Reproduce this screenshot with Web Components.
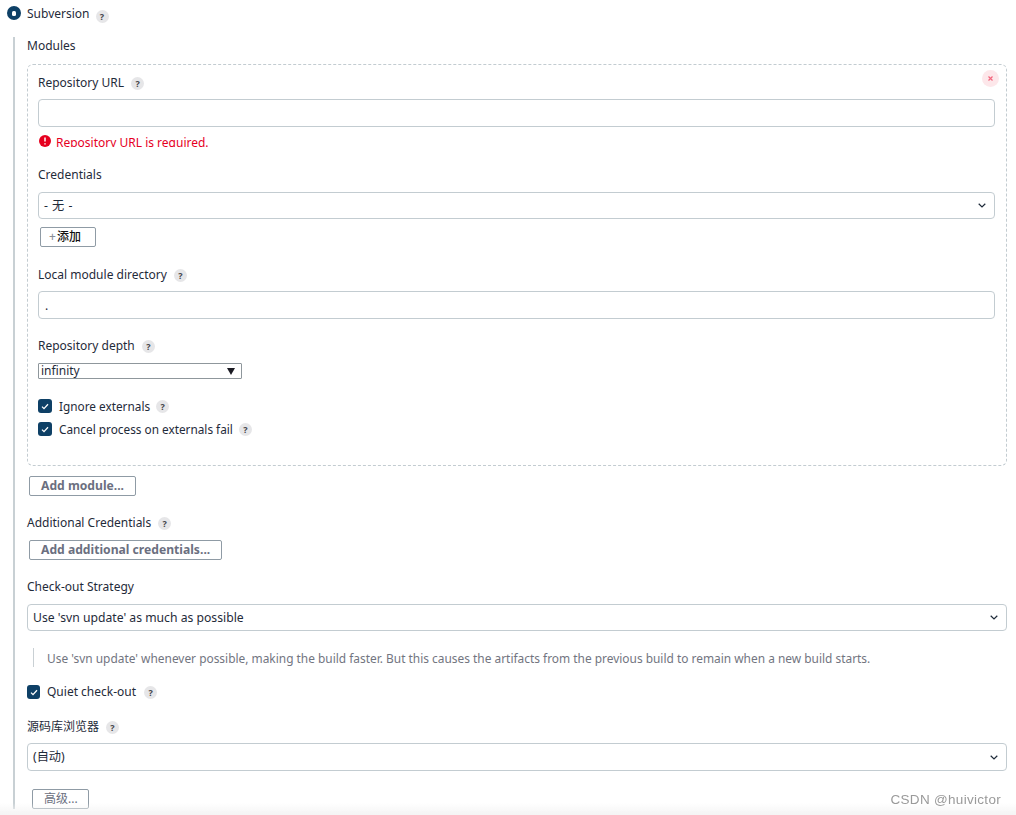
<!DOCTYPE html>
<html>
<head>
<meta charset="utf-8">
<style>
  html, body { margin: 0; height: 815px; overflow: hidden; background: #fff; }
  body {
    font: 12px/18px "Noto Sans", "Noto Sans CJK SC", sans-serif;
    color: #1f2b3a;
  }
</style>
</head>
<body>

<svn-page>
  <radio-head slot="head">Subversion</radio-head>

  <field-label>Modules</field-label>
  <module-box style="margin-top:9px">
    <field-label help>Repository URL</field-label>
    <text-box style="margin-top:7px"></text-box>
    <error-line style="margin-top:8px">Repository URL is required.</error-line>

    <field-label style="margin-top:19px">Credentials</field-label>
    <select-box style="margin-top:8px;word-spacing:1px">- 无 -</select-box>
    <plain-button kind="add" style="margin:8px 0 0 2px">添加</plain-button>

    <field-label help style="margin-top:19px">Local module directory</field-label>
    <text-box style="margin-top:7px">.</text-box>

    <field-label help style="margin-top:18px">Repository depth</field-label>
    <native-select style="margin-top:8px">infinity</native-select>

    <check-row help style="margin-top:20px">Ignore externals</check-row>
    <check-row help style="margin-top:9px">Cancel process on externals fail</check-row>
  </module-box>
  <plain-button style="margin:10px 0 0 2px">Add module...</plain-button>

  <field-label help style="margin-top:18px">Additional Credentials</field-label>
  <plain-button style="margin:8px 0 0 2px">Add additional credentials...</plain-button>

  <field-label style="margin-top:18px">Check-out Strategy</field-label>
  <select-box style="margin-top:8px">Use 'svn update' as much as possible</select-box>
  <help-note style="margin-top:17px">Use 'svn update' whenever possible, making the build faster. But this causes the artifacts from the previous build to remain when a new build starts.</help-note>

  <check-row help narrow style="margin-top:18px">Quiet check-out</check-row>

  <field-label help style="margin-top:19px">源码库浏览器</field-label>
  <select-box style="margin-top:7px;height:28px">(自动)</select-box>
  <plain-button kind="plain" style="margin:18px 0 0 5px">高级...</plain-button>
</svn-page>

<csdn-mark>CSDN @huivictor</csdn-mark>

<script>
// Small grey "?" bubble shown next to labels
class HelpIcon extends HTMLElement {
  constructor() {
    super();
    this.attachShadow({ mode: "open" }).innerHTML = `
      <style>
        :host {
          display: inline-flex; align-items: center; justify-content: center;
          width: 13px; height: 13px; border-radius: 50%;
          background: #e6e6e8; color: #45454b;
          font: 700 9px/13px "Noto Sans", sans-serif;
        }
      </style>?`;
  }
}

class FieldLabel extends HTMLElement {
  constructor() {
    super();
    this.attachShadow({ mode: "open" }).innerHTML = `
      <style>
        :host { display: flex; align-items: center; gap: 7px; height: 18px; white-space: nowrap; }
        help-icon { margin-top: 1px; }
      </style>
      <span><slot></slot></span>
      ${this.hasAttribute("help") ? "<help-icon></help-icon>" : ""}`;
  }
}

// Radio button heading of the selected SCM
class RadioHead extends HTMLElement {
  constructor() {
    super();
    this.attachShadow({ mode: "open" }).innerHTML = `
      <style>
        :host { display: flex; align-items: center; height: 18px; white-space: nowrap; }
        .dot {
          width: 14px; height: 14px; border-radius: 50%; background: #0e4066;
          display: flex; align-items: center; justify-content: center;
          margin: 0 6px 2px 0;
        }
        .dot i { width: 4px; height: 5px; border-radius: 1.5px; background: #fff; }
        help-icon { margin: 5px 0 0 6px; }
      </style>
      <span class="dot"><i></i></span><span><slot></slot></span><help-icon></help-icon>`;
  }
}

class TextBox extends HTMLElement {
  constructor() {
    super();
    this.attachShadow({ mode: "open" }).innerHTML = `
      <style>
        :host {
          display: block; box-sizing: border-box; height: 28px; padding: 0 6px;
          border: 1px solid #c3ccd1; border-radius: 4px; background: #fff;
          line-height: 27px; color: #1f2b3a;
        }
      </style><slot></slot>`;
  }
}

class SelectBox extends HTMLElement {
  constructor() {
    super();
    this.attachShadow({ mode: "open" }).innerHTML = `
      <style>
        :host {
          display: flex; align-items: center; justify-content: space-between;
          box-sizing: border-box; height: 27px; padding: 0 8px 0 5px; font-size: 12.2px;
          border: 1px solid #c3ccd1; border-radius: 4px; background: #fff; white-space: nowrap;
        }
        svg { width: 8px; height: 5px; }
      </style>
      <span><slot></slot></span>
      <svg viewBox="0 0 8 5"><path d="M.7.8 4 4 7.3.8" fill="none" stroke="#1f2b3a" stroke-width="1.2"/></svg>`;
  }
}

// Unstyled browser-like select for the depth field
class NativeSelect extends HTMLElement {
  constructor() {
    super();
    this.attachShadow({ mode: "open" }).innerHTML = `
      <style>
        :host {
          display: flex; align-items: center; justify-content: space-between;
          box-sizing: border-box; width: 204px; height: 16px; padding: 0 6px 0 2px;
          border: 1px solid #8f979c; border-radius: 1px; background: #fff; line-height: 16px;
        }
        svg { width: 8px; height: 7px; }
      </style>
      <span><slot></slot></span>
      <svg viewBox="0 0 8 7"><path d="M0 0h8L4 7z" fill="#1a1a22"/></svg>`;
  }
}

class PlainButton extends HTMLElement {
  constructor() {
    super();
    const kind = this.getAttribute("kind");
    this.attachShadow({ mode: "open" }).innerHTML = `
      <style>
        :host {
          display: flex; width: fit-content; align-items: center; box-sizing: border-box;
          height: 20px; padding: ${kind === "add" ? "0 14px 0 8px" : kind === "plain" ? "0 10px 0 11px" : "0 11px"};
          border: 1px solid #8f9ba5; border-radius: 2px; background: #fff; white-space: nowrap;
          font-weight: ${kind === "plain" ? 400 : kind === "add" ? 500 : 700};
          font-size: ${kind ? 12 : 12.15}px;
          color: ${kind === "add" ? "#111" : "#6b6f80"};
        }
        .plus { color: #8a8f96; margin-right: 1px; }
      </style>
      ${kind === "add" ? '<span class="plus">+</span>' : ""}<slot></slot>`;
  }
}

class ErrorLine extends HTMLElement {
  constructor() {
    super();
    this.attachShadow({ mode: "open" }).innerHTML = `
      <style>
        :host {
          display: flex; align-items: flex-start; height: 12px; overflow: hidden;
          color: #e6001f; white-space: nowrap; line-height: 16px;
        }
        svg { width: 12px; height: 12px; margin: 0 5px 0 1px; flex: none; }
      </style>
      <svg viewBox="0 0 12 12"><circle cx="6" cy="6" r="6" fill="#e6001f"/><path d="M6 2.6v4M6 8.2v1.2" stroke="#fff" stroke-width="1.5"/></svg>
      <span><slot></slot></span>`;
  }
}

class CheckRow extends HTMLElement {
  constructor() {
    super();
    const narrow = this.hasAttribute("narrow");
    this.attachShadow({ mode: "open" }).innerHTML = `
      <style>
        :host {
          display: flex; align-items: center; height: 14px; white-space: nowrap;
          font-size: ${narrow ? 12 : 11.8}px;
        }
        .box {
          width: ${narrow ? 13 : 14}px; height: 14px; border-radius: 3px; background: #0e4066;
          margin-right: 7px; flex: none; display: flex; align-items: center; justify-content: center;
        }
        svg { width: 8px; height: 7px; }
        help-icon { margin: 1px 0 0 ${narrow ? 8 : 6}px; }
      </style>
      <span class="box"><svg viewBox="0 0 8 7"><path d="M1 3.6 3 5.6 7 1.2" fill="none" stroke="#fff" stroke-width="1.3"/></svg></span>
      <span><slot></slot></span>
      ${this.hasAttribute("help") ? "<help-icon></help-icon>" : ""}`;
  }
}

class HelpNote extends HTMLElement {
  constructor() {
    super();
    this.attachShadow({ mode: "open" }).innerHTML = `
      <style>
        :host {
          display: block; margin-left: 6px; padding-left: 13px; height: 19px; line-height: 20px;
          border-left: 1px solid #c9d0d4; color: #72757f; font-size: 11.92px; white-space: nowrap;
        }
      </style><slot></slot>`;
  }
}

// Dashed repeatable-chunk box with the red delete button in its corner
class ModuleBox extends HTMLElement {
  constructor() {
    super();
    this.attachShadow({ mode: "open" }).innerHTML = `
      <style>
        :host {
          display: block; position: relative; box-sizing: border-box; height: 402px;
          padding: 9px 11px 0 10px;
          border: 1px dashed #c3ccd1; border-radius: 6px;
        }
        .close {
          position: absolute; top: 5px; right: 7px; width: 17px; height: 17px; border-radius: 50%;
          background: #fde7ea; display: flex; align-items: center; justify-content: center;
        }
        svg { width: 5px; height: 5px; }
      </style>
      <span class="close"><svg viewBox="0 0 5 5"><path d="M.5.5l4 4M4.5.5l-4 4" stroke="#f2667d" stroke-width="1.2"/></svg></span>
      <slot></slot>`;
  }
}

// Page frame: heading, then the content indented behind a grey rule
class SvnPage extends HTMLElement {
  constructor() {
    super();
    this.attachShadow({ mode: "open" }).innerHTML = `
      <style>
        :host { display: block; width: 1007px; padding: 5px 0 0 7px; box-sizing: border-box; }
        .body {
          margin: 14px 0 0 6px; padding: 0 0 0 12px; height: 772px; box-sizing: border-box;
          border-left: 2px solid #c8d0d4;
        }
      </style>
      <slot name="head"></slot>
      <div class="body"><slot></slot></div>`;
  }
}

// Blog watermark and the soft fade along the bottom edge
class CsdnMark extends HTMLElement {
  constructor() {
    super();
    this.attachShadow({ mode: "open" }).innerHTML = `
      <style>
        :host {
          position: fixed; left: 0; right: 0; bottom: 0; height: 30px;
          background: linear-gradient(to bottom, rgba(243,243,243,0) 60%, #f4f4f4 100%);
          color: #9a9a9a; font: 13.5px/30px "Liberation Sans", sans-serif;
          text-align: right; padding-right: 15px; box-sizing: border-box; letter-spacing: .3px;
        }
      </style><slot></slot>`;
  }
}

customElements.define("help-icon", HelpIcon);
customElements.define("field-label", FieldLabel);
customElements.define("radio-head", RadioHead);
customElements.define("text-box", TextBox);
customElements.define("select-box", SelectBox);
customElements.define("native-select", NativeSelect);
customElements.define("plain-button", PlainButton);
customElements.define("error-line", ErrorLine);
customElements.define("check-row", CheckRow);
customElements.define("help-note", HelpNote);
customElements.define("module-box", ModuleBox);
customElements.define("svn-page", SvnPage);
customElements.define("csdn-mark", CsdnMark);
</script>
</body>
</html>
